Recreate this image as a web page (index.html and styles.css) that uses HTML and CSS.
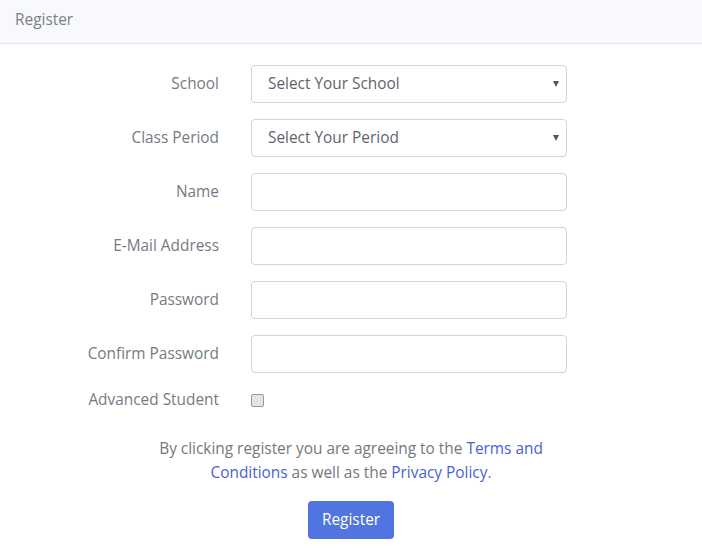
FILE: index.html
```html
<!DOCTYPE html>
<html>
<head>
<meta charset="utf-8">
<link rel="stylesheet" href="styles.css">
</head>
<body>
<div class="card">
  <div class="card-header">Register</div>
  <div class="card-body">
    <div class="form-row">
      <label class="label">School</label>
      <div class="control select"><span>Select Your School</span><span class="caret"></span></div>
    </div>
    <div class="form-row">
      <label class="label">Class Period</label>
      <div class="control select"><span>Select Your Period</span><span class="caret"></span></div>
    </div>
    <div class="form-row">
      <label class="label">Name</label>
      <div class="control"></div>
    </div>
    <div class="form-row">
      <label class="label">E-Mail Address</label>
      <div class="control"></div>
    </div>
    <div class="form-row">
      <label class="label">Password</label>
      <div class="control"></div>
    </div>
    <div class="form-row">
      <label class="label">Confirm Password</label>
      <div class="control"></div>
    </div>
    <div class="form-row check-row">
      <label class="label">Advanced Student</label>
      <div><span class="checkbox"></span></div>
    </div>
    <p class="terms">By clicking register you are agreeing to the <a href="#">Terms and Conditions</a> as well as the <a href="#">Privacy Policy</a>.</p>
    <div class="actions"><button class="btn">Register</button></div>
  </div>
</div>
</body>
</html>
```
FILE: styles.css
```css
html, body { margin: 0; padding: 0; background: #fff; }
body {
  font-family: "Open Sans", "Noto Sans", sans-serif;
  font-size: 15.4px;
  color: #737880;
}
.card-header {
  height: 44px;
  box-sizing: border-box;
  padding: 0 15px;
  line-height: 40px;
  background: #f7f9fc;
  border-bottom: 1px solid #e1e6ee;
  color: #7a7f87;
}
.card-body { padding-top: 21px; }
.form-row {
  display: grid;
  grid-template-columns: 219px 316px;
  column-gap: 32px;
  align-items: center;
  margin-bottom: 16px;
}
.label { text-align: right; color: #767b83; line-height: 22px; }
.control {
  height: 38px;
  box-sizing: border-box;
  border: 1px solid #ced4da;
  border-radius: 4px;
  background: #fff;
}
.select {
  display: flex;
  align-items: center;
  justify-content: space-between;
  padding: 0 7px 1px 16px;
  color: #5f646b;
}
.caret {
  width: 0; height: 0;
  border-left: 3px solid transparent;
  border-right: 3px solid transparent;
  border-top: 6px solid #555;
}
.check-row { height: 22px; margin-bottom: 26px; }
.checkbox {
  display: block;
  width: 13px; height: 13px;
  box-sizing: border-box;
  border: 1px solid #9a9a9a;
  border-radius: 2px;
  background: #e4e4e4;
  margin-top: 1px;
}
.terms {
  width: 400px;
  margin: 0 auto;
  text-align: center;
  line-height: 24px;
}
.terms a { color: #4a5fd2; text-decoration: none; }
.actions { display: flex; justify-content: center; margin-top: 16px; }
.btn {
  width: 86px; height: 38px;
  border: 0;
  border-radius: 4px;
  background: #5075e0;
  color: #fff;
  font-family: inherit;
  font-size: 15.4px;
  padding: 0 0 2px;
}
```
